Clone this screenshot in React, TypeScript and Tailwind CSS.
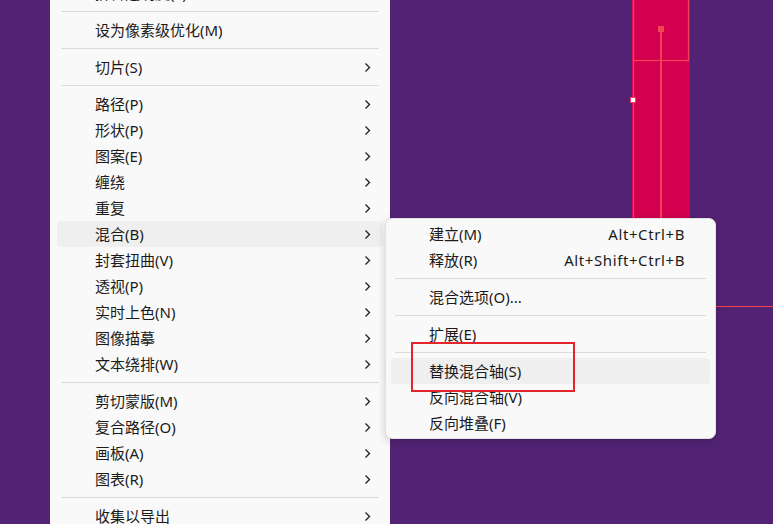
import React from "react";

type Item =
  | { type: "sep" }
  | { type: "item"; label: string; sub?: boolean; shortcut?: string; active?: boolean };

const mainItems: Item[] = [
  { type: "item", label: "拼合透明度(F)..." },
  { type: "sep" },
  { type: "item", label: "设为像素级优化(M)" },
  { type: "sep" },
  { type: "item", label: "切片(S)", sub: true },
  { type: "sep" },
  { type: "item", label: "路径(P)", sub: true },
  { type: "item", label: "形状(P)", sub: true },
  { type: "item", label: "图案(E)", sub: true },
  { type: "item", label: "缠绕", sub: true },
  { type: "item", label: "重复", sub: true },
  { type: "item", label: "混合(B)", sub: true, active: true },
  { type: "item", label: "封套扭曲(V)", sub: true },
  { type: "item", label: "透视(P)", sub: true },
  { type: "item", label: "实时上色(N)", sub: true },
  { type: "item", label: "图像描摹", sub: true },
  { type: "item", label: "文本绕排(W)", sub: true },
  { type: "sep" },
  { type: "item", label: "剪切蒙版(M)", sub: true },
  { type: "item", label: "复合路径(O)", sub: true },
  { type: "item", label: "画板(A)", sub: true },
  { type: "item", label: "图表(R)", sub: true },
  { type: "sep" },
  { type: "item", label: "收集以导出", sub: true },
];

const subItems: Item[] = [
  { type: "item", label: "建立(M)", shortcut: "Alt+Ctrl+B" },
  { type: "item", label: "释放(R)", shortcut: "Alt+Shift+Ctrl+B" },
  { type: "sep" },
  { type: "item", label: "混合选项(O)..." },
  { type: "sep" },
  { type: "item", label: "扩展(E)" },
  { type: "sep" },
  { type: "item", label: "替换混合轴(S)", active: true },
  { type: "item", label: "反向混合轴(V)" },
  { type: "item", label: "反向堆叠(F)" },
];

function Chevron() {
  return (
    <svg width="7" height="11" viewBox="0 0 7 11" className="shrink-0">
      <polyline points="1.5,1.5 5.5,5.5 1.5,9.5" fill="none" stroke="#1f1f1f" strokeWidth="1.3" />
    </svg>
  );
}

function MenuList({ items, rightPad }: { items: Item[]; rightPad: string }) {
  return (
    <div className="flex flex-col">
      {items.map((it, i) =>
        it.type === "sep" ? (
          <div key={i} className="px-[4px] py-[5px]">
            <div className="h-px bg-[#dadada]" />
          </div>
        ) : (
          <div
            key={i}
            className={`flex h-[26px] items-center rounded-[4px] pl-[38px] ${rightPad} ${
              it.active ? "bg-[#efefef]" : ""
            }`}
          >
            <span className="flex-1 whitespace-nowrap">{it.label}</span>
            {it.shortcut && (
              <span className="whitespace-nowrap tracking-[0.6px]">{it.shortcut}</span>
            )}
            {it.sub && <Chevron />}
          </div>
        )
      )}
    </div>
  );
}

export default function App() {
  return (
    <div className="relative h-[524px] w-[773px] overflow-hidden bg-[#522374] font-[family-name:'Noto_Sans','Noto_Sans_CJK_SC',sans-serif] text-[15px] text-[#1b1b1b]">
      {/* canvas artwork */}
      <svg className="absolute left-0 top-0" width="773" height="524" viewBox="0 0 773 524">
        <rect x="632" y="-2" width="58" height="310" fill="#d4004f" />
        <line x1="633.5" y1="-2" x2="633.5" y2="308" stroke="#f2405a" strokeWidth="1.3" />
        <rect x="633.5" y="-2" width="55" height="62.5" fill="none" stroke="#f2405a" strokeWidth="1.3" />
        <line x1="661" y1="28" x2="661" y2="308" stroke="#f2405a" strokeWidth="2" />
        <rect x="658" y="26" width="6" height="6" fill="#f5454f" />
        <rect x="630.5" y="97.5" width="5" height="5" fill="#ffffff" stroke="#f2405a" strokeWidth="1" />
        <line x1="400" y1="306.5" x2="773" y2="306.5" stroke="#ff3b45" strokeWidth="1" />
      </svg>

      {/* main menu (extends beyond the window top and bottom) */}
      <div className="absolute left-[50px] top-[-20px] w-[340px] bg-[#f9f9f9] px-[7px]">
        <MenuList items={mainItems} rightPad="pr-[12px]" />
      </div>

      {/* submenu */}
      <div className="absolute left-[385px] top-[218px] w-[331px] rounded-[7px] border border-[#e2e2e2] bg-[#f9f9f9] px-[5px] py-[2px] shadow-[0_2px_8px_rgba(0,0,0,0.18)]">
        <MenuList items={subItems} rightPad="pr-[25px]" />
        <div className="pointer-events-none absolute left-[25px] top-[123px] h-[50px] w-[164px] border-2 border-[#e3242b]" />
      </div>
    </div>
  );
}
